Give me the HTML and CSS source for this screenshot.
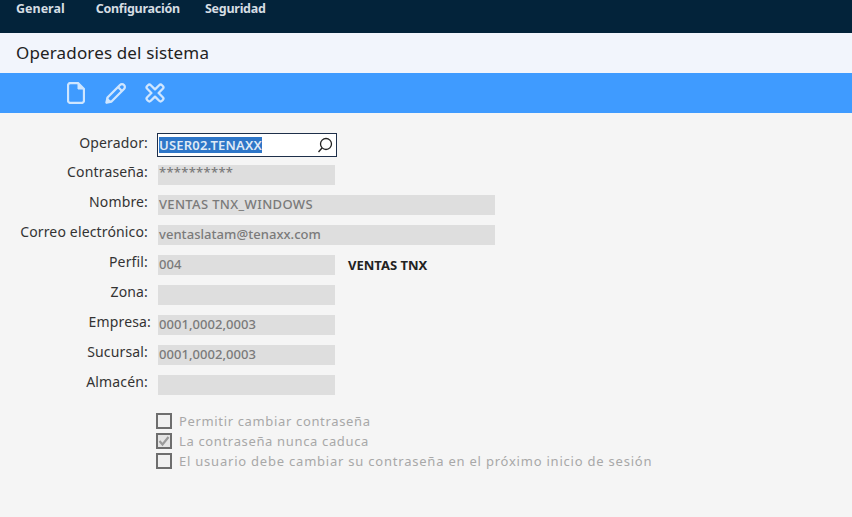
FILE: index.html
```html
<!DOCTYPE html>
<html lang="es">
<head>
<meta charset="utf-8">
<title>Operadores del sistema</title>
<link rel="stylesheet" href="styles.css">
</head>
<body>
<nav class="topbar">
  <span class="menu menu-first">General</span>
  <span class="menu">Configuración</span>
  <span class="menu">Seguridad</span>
</nav>
<header class="title">Operadores del sistema</header>
<div class="toolbar">
  <svg class="icon icon-doc" width="18" height="22" viewBox="0 0 18 22" fill="none" stroke="#cfe6ff" stroke-width="2.300" stroke-linejoin="round"><path d="M3.500 1H11l6 6v11.500a2.500 2.500 0 0 1-2.500 2.500h-11A2.500 2.500 0 0 1 1 18.500v-15A2.500 2.500 0 0 1 3.500 1z"/><path d="M11 1.500V7h5.500" fill="#cfe6ff" stroke-width="1"/></svg>
  <svg class="icon icon-pen" width="22" height="22" viewBox="0 0 22 22" fill="none" stroke="#cfe6ff" stroke-width="2.300" stroke-linejoin="round"><path d="M6.500 19.500L1.500 20.500 2.500 15.500 15 3a2.800 2.800 0 0 1 4 0 2.800 2.800 0 0 1 0 4z"/><path d="M13 5l4 4"/><path d="M1.500 20.500l.8-4 3.200 3.200z" fill="#cfe6ff" stroke-width="1.500"/></svg>
  <svg class="icon icon-x" width="20" height="20" viewBox="0 0 20 20" fill="none" stroke="#cfe6ff" stroke-width="2.300" stroke-linejoin="round"><path d="M3 2.200a2 2 0 0 1 2.800 0L10 6.400l4.200-4.200a2 2 0 0 1 2.800 0l.8.8a2 2 0 0 1 0 2.800L13.600 10l4.200 4.200a2 2 0 0 1 0 2.800l-.8.8a2 2 0 0 1-2.800 0L10 13.600l-4.200 4.200a2 2 0 0 1-2.800 0l-.8-.8a2 2 0 0 1 0-2.800L6.400 10 2.200 5.800a2 2 0 0 1 0-2.800z"/></svg>
</div>
<main class="form">
  <div class="row first">
    <label class="label">Operador:</label>
    <div class="lookup"><span class="selected">USER02.TENAXX</span>
      <svg class="search" width="18" height="18" viewBox="0 0 18 18" fill="none" stroke="#222" stroke-width="1.300"><circle cx="10" cy="8" r="5.500"/><path d="M6 12l-3.500 4"/></svg>
    </div>
  </div>
  <div class="row"><label class="label">Contraseña:</label><div class="field pass">**********</div></div>
  <div class="row"><label class="label">Nombre:</label><div class="field wide caps">VENTAS TNX_WINDOWS</div></div>
  <div class="row"><label class="label">Correo electrónico:</label><div class="field wide">ventaslatam@tenaxx.com</div></div>
  <div class="row"><label class="label">Perfil:</label><div class="field">004</div><strong class="desc">VENTAS TNX</strong></div>
  <div class="row"><label class="label">Zona:</label><div class="field"></div></div>
  <div class="row"><label class="label label-over">Empresa:</label><div class="field">0001,0002,0003</div></div>
  <div class="row"><label class="label">Sucursal:</label><div class="field">0001,0002,0003</div></div>
  <div class="row"><label class="label">Almacén:</label><div class="field"></div></div>
  <div class="checks">
    <div class="check"><span class="box"></span>Permitir cambiar contraseña</div>
    <div class="check"><span class="box box-checked"><svg width="12" height="12" viewBox="0 0 12 12" fill="none" stroke="#9a9a9a" stroke-width="2.200"><path d="M1.500 6l3 3.500 6-7.500"/></svg></span>La contraseña nunca caduca</div>
    <div class="check check-long"><span class="box"></span>El usuario debe cambiar su contraseña en el próximo inicio de sesión</div>
  </div>
</main>
</body>
</html>
```
FILE: styles.css
```css
* { box-sizing: border-box; }
html, body { margin: 0; height: 100%; }
body {
  background: #f5f5f5;
  font-family: "Noto Sans", "Open Sans", sans-serif;
  color: #333;
  overflow: hidden;
}
.topbar {
  height: 33px;
  background: #03233a;
  display: flex;
  gap: 25px;
  padding: 0 0 0 16px;
  align-items: flex-start;
}
.menu {
  color: #d5dde3;
  font-size: 12.5px;
  font-weight: 700;
  line-height: 17px;
  letter-spacing: -0.25px;
}
.menu-first { margin-right: 6px; letter-spacing: 0; }
.title {
  height: 40px;
  background: #f2f5fc;
  padding-left: 16px;
  font-size: 17px;
  line-height: 40px;
  color: #222;
  letter-spacing: 0.15px;
}
.toolbar {
  height: 40px;
  background: #3f9bff;
  display: flex;
  align-items: center;
  padding-left: 67px;
}
.icon-pen { margin-left: 20px; }
.icon-x { margin-left: 18px; }
.form { padding-top: 20px; }
.row {
  display: flex;
  align-items: flex-start;
  height: 30px;
}
.row.first { height: 32px; }
.label {
  width: 148px;
  text-align: right;
  font-size: 14px;
  line-height: 14px;
  color: #333;
  margin-right: 10px;
  letter-spacing: 0.15px;
  white-space: nowrap;
}
.first .label { margin-right: 9px; line-height: 20px; }
.label-over { width: 151px; margin-right: 7px; }
.field {
  width: 177px;
  height: 20px;
  background: #dedede;
  color: #7a7a7a;
  font-size: 13px;
  line-height: 18px;
  padding-left: 1px;
  font-weight: 500;
  letter-spacing: 0.05px;
}
.field.wide { width: 337px; }
.field.caps { letter-spacing: 0.35px; }
.pass { line-height: 14px; letter-spacing: 0.3px; }
.lookup {
  width: 180px;
  height: 24px;
  background: #fff;
  border: 1px solid #1e2f4a;
  padding-left: 1px;
  display: flex;
  align-items: center;
  justify-content: space-between;
}
.selected {
  background: #2e76c8;
  color: #dfe9f5;
  font-size: 13px;
  font-weight: 600;
  line-height: 16px;
  letter-spacing: 0.2px;
}
.search { margin-right: 2px; }
.desc {
  margin-left: 13px;
  font-size: 13px;
  line-height: 20px;
  color: #222;
}
.checks { padding: 6px 0 0 156px; }
.check {
  display: flex;
  align-items: center;
  height: 20px;
  font-size: 13px;
  color: #a8a8a8;
  letter-spacing: 0.65px;
}
.check-long { letter-spacing: 0.78px; }
.box {
  width: 16px;
  height: 16px;
  border: 2px solid #6e6e6e;
  background: #f0f0f0;
  margin-right: 7px;
  display: flex;
  align-items: center;
  justify-content: center;
}
.box-checked { background: #e4e4e4; }
```
